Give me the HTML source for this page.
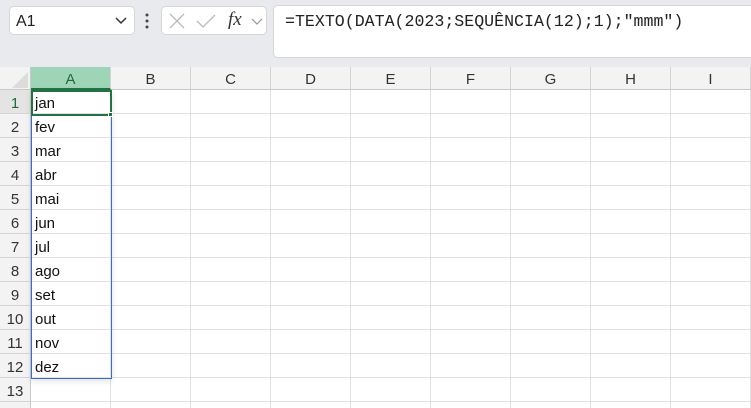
<!DOCTYPE html>
<html><head><style>
*{margin:0;padding:0;box-sizing:border-box}
html,body{width:751px;height:408px;overflow:hidden}
body{background:#fff;font-family:"Liberation Sans",sans-serif;position:relative}
.top{position:absolute;left:0;top:0;width:751px;height:67px;background:#e8eaed}
.nb{position:absolute;left:9px;top:6px;width:126px;height:29px;background:#fff;border:1px solid #d6d6d6;border-radius:5px;font-size:16px;color:#222;padding:6px 0 0 6px}
.fx{position:absolute;left:161px;top:6px;width:106px;height:29px;background:#fff;border:1px solid #d6d6d6;border-radius:5px}
.fb{position:absolute;left:273px;top:5px;width:490px;height:53px;background:#fff;border:1px solid #d6d6d6;border-radius:5px}
.ft{position:absolute;left:285px;top:12px;font-family:"Liberation Mono",monospace;font-size:16.6px;color:#222}
.ch{position:absolute;top:67px;height:23px;background:#f3f3f3;border-right:1px solid #d4d4d4;border-bottom:1px solid #c8c8c8;font-size:15px;color:#333;text-align:center;line-height:25px}
.rh{position:absolute;left:0;width:31px;height:24px;background:#f3f3f3;border-bottom:1px solid #d4d4d4;border-right:1px solid #c8c8c8;font-size:15px;color:#333;text-align:center;line-height:28px}
.hl{position:absolute;height:1px;left:31px;width:720px;background:#e1e1e1}
.vl{position:absolute;width:1px;top:90px;height:318px;background:#e1e1e1}
.c{position:absolute;left:35px;font-size:15px;color:#111;line-height:28px}
</style></head><body>
<div class="top"></div>
<div class="nb">A1<svg style="position:absolute;left:105px;top:10px" width="12" height="8"><path d="M1 1L6 6L11 1" stroke="#333" stroke-width="1.5" fill="none"/></svg></div>
<svg style="position:absolute;left:145px;top:13px" width="4" height="16"><circle cx="2" cy="2" r="1.5" fill="#444"/><circle cx="2" cy="8" r="1.5" fill="#444"/><circle cx="2" cy="14" r="1.5" fill="#444"/></svg>
<div class="fx">
<svg style="position:absolute;left:7px;top:6px" width="16" height="16"><path d="M1 1L15 15M15 1L1 15" stroke="#bbb" stroke-width="1.3"/></svg>
<svg style="position:absolute;left:34px;top:6px" width="20" height="16"><path d="M1 8L7 14L19 2" stroke="#bbb" stroke-width="1.3" fill="none"/></svg>
<span style="position:absolute;left:66px;top:2px;font-family:'Liberation Serif',serif;font-style:italic;font-size:19px;color:#333">fx</span>
<svg style="position:absolute;left:89px;top:11px" width="12" height="8"><path d="M1 1L6 6L11 1" stroke="#999" stroke-width="1.2" fill="none"/></svg>
</div>
<div class="fb"></div>
<div class="ft">=TEXTO(DATA(2023;SEQUÊNCIA(12);1);"mmm")</div>
<div style="position:absolute;left:0;top:67px;width:31px;height:23px;background:#f3f3f3;border-right:1px solid #c8c8c8;border-bottom:1px solid #c8c8c8"></div>
<svg style="position:absolute;left:12px;top:72px" width="16" height="16"><path d="M16 0L16 16L0 16Z" fill="#dcdcdc"/></svg>
<div class="ch" style="left:31px;width:80px;background:#9fd5b7;color:#1e6b3c;border-bottom:2px solid #217346">A</div>
<div class="ch" style="left:111px;width:80px">B</div>
<div class="ch" style="left:191px;width:80px">C</div>
<div class="ch" style="left:271px;width:80px">D</div>
<div class="ch" style="left:351px;width:80px">E</div>
<div class="ch" style="left:431px;width:80px">F</div>
<div class="ch" style="left:511px;width:80px">G</div>
<div class="ch" style="left:591px;width:80px">H</div>
<div class="ch" style="left:671px;width:80px">I</div>
<div class="vl" style="left:110px"></div><div class="vl" style="left:190px"></div><div class="vl" style="left:270px"></div><div class="vl" style="left:350px"></div><div class="vl" style="left:430px"></div><div class="vl" style="left:510px"></div><div class="vl" style="left:590px"></div><div class="vl" style="left:670px"></div><div class="vl" style="left:750px"></div>
<div class="hl" style="top:113px"></div><div class="hl" style="top:137px"></div><div class="hl" style="top:161px"></div><div class="hl" style="top:185px"></div><div class="hl" style="top:209px"></div><div class="hl" style="top:233px"></div><div class="hl" style="top:257px"></div><div class="hl" style="top:281px"></div><div class="hl" style="top:305px"></div><div class="hl" style="top:329px"></div><div class="hl" style="top:353px"></div><div class="hl" style="top:377px"></div><div class="hl" style="top:401px"></div>
<div class="rh" style="top:90px;background:#e4e4e4;color:#1e6b3c">1</div>
<div class="rh" style="top:114px">2</div><div class="rh" style="top:138px">3</div><div class="rh" style="top:162px">4</div><div class="rh" style="top:186px">5</div><div class="rh" style="top:210px">6</div><div class="rh" style="top:234px">7</div><div class="rh" style="top:258px">8</div><div class="rh" style="top:282px">9</div><div class="rh" style="top:306px">10</div><div class="rh" style="top:330px">11</div><div class="rh" style="top:354px">12</div><div class="rh" style="top:378px">13</div><div class="rh" style="top:402px"></div>
<div style="position:absolute;left:31px;top:90px;width:81px;height:289px;border:1px solid #3a6fc9;box-shadow:0 2px 6px rgba(0,0,0,.12)"></div>
<div style="position:absolute;left:31px;top:90px;width:81px;height:26px;border:2px solid #217346"></div>
<div style="position:absolute;left:108px;top:112px;width:5px;height:5px;background:#217346;border:1px solid #fff"></div>
<div class="c" style="top:90px">jan</div><div class="c" style="top:114px">fev</div><div class="c" style="top:138px">mar</div><div class="c" style="top:162px">abr</div><div class="c" style="top:186px">mai</div><div class="c" style="top:210px">jun</div><div class="c" style="top:234px">jul</div><div class="c" style="top:258px">ago</div><div class="c" style="top:282px">set</div><div class="c" style="top:306px">out</div><div class="c" style="top:330px">nov</div><div class="c" style="top:354px">dez</div>
</body></html>
